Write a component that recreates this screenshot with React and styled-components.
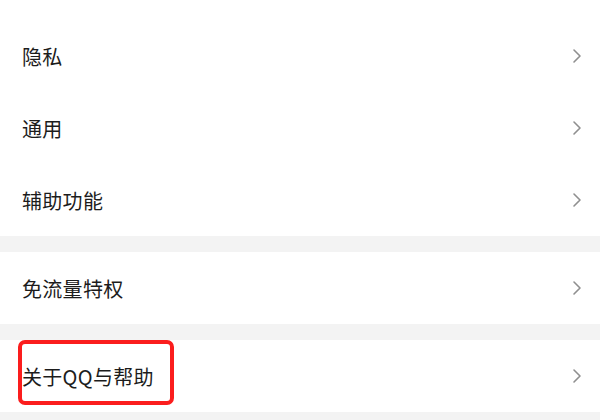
import React from 'react';
import styled, { createGlobalStyle } from 'styled-components';

const GlobalStyle = createGlobalStyle`
  html, body {
    margin: 0;
    padding: 0;
    background: #ffffff;
  }
  body {
    font-family: "Noto Sans CJK SC", "Noto Sans", sans-serif;
  }
`;

const Page = styled.div`
  width: 600px;
  height: 420px;
  overflow: hidden;
  background: #f3f3f3;
  display: flex;
  flex-direction: column;
  gap: 16px;
`;

const Section = styled.div`
  background: #ffffff;
  padding-top: ${(p) => p.$top || 0}px;
  display: flex;
  flex-direction: column;
`;

const Row = styled.div`
  height: 72px;
  display: flex;
  align-items: center;
  justify-content: space-between;
  padding: 0 18px 0 22px;
`;

const Label = styled.span`
  position: relative;
  font-size: 20px;
  color: #1c1c1c;
  letter-spacing: 0.3px;

  ${(p) =>
    p.$marked &&
    `
    &::after {
      content: "";
      position: absolute;
      left: -4px;
      right: -20px;
      top: -22px;
      bottom: -14px;
      border: 4px solid #fb1d1d;
      border-radius: 7px;
    }
  `}
`;

const Chevron = () => (
  <svg width="10" height="16" viewBox="0 0 10 16" fill="none">
    <path d="M2 2 L8 8 L2 14" stroke="#8f8f8f" strokeWidth="1.6" strokeLinecap="round" strokeLinejoin="round" />
  </svg>
);

const Item = ({ label, marked }) => (
  <Row>
    <Label $marked={marked}>{label}</Label>
    <Chevron />
  </Row>
);

export default function App() {
  return (
    <>
      <GlobalStyle />
      <Page>
        <Section $top={20}>
          <Item label="隐私" />
          <Item label="通用" />
          <Item label="辅助功能" />
        </Section>
        <Section>
          <Item label="免流量特权" />
        </Section>
        <Section>
          <Item label="关于QQ与帮助" marked />
        </Section>
      </Page>
    </>
  );
}
